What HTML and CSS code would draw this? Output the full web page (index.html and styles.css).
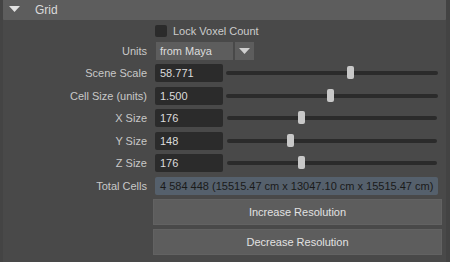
FILE: index.html
```html
<!DOCTYPE html>
<html lang="en">
<head>
    <meta charset="UTF-8">
    <meta name="viewport" content="width=device-width, initial-scale=1.0">
    <title>Grid</title>
    <link rel="stylesheet" href="styles.css">
</head>
<body>

<div class="frame">
    <div class="section-header">
        <svg class="caret" width="12" height="7" viewBox="0 0 12 7"><path d="M0 0 H11 L5.5 6 Z" fill="#e2e2e2"/></svg>
        <span>Grid</span>
    </div>

    <div class="lock-row">
        <span class="checkbox"></span>
        <span class="lock-label">Lock Voxel Count</span>
    </div>

    <div class="units-row">
        <span class="label">Units</span>
        <div class="dropdown">
            <span class="dropdown-value">from Maya</span>
            <span class="dropdown-arrow">
                <svg width="11" height="6" viewBox="0 0 11 6"><path d="M0 0 H11 L5.5 6 Z" fill="#cfcfcf"/></svg>
            </span>
        </div>
    </div>

    <div class="fields">
        <span class="label">Scene Scale</span>
        <span class="field">58.771</span>
        <div class="slider"><span class="handle" style="left: 121px"></span></div>

        <span class="label">Cell Size (units)</span>
        <span class="field">1.500</span>
        <div class="slider"><span class="handle" style="left: 101px"></span></div>

        <span class="label">X Size</span>
        <span class="field">176</span>
        <div class="slider short"><span class="handle" style="left: 71px"></span></div>

        <span class="label">Y Size</span>
        <span class="field">148</span>
        <div class="slider short"><span class="handle" style="left: 60px"></span></div>

        <span class="label">Z Size</span>
        <span class="field">176</span>
        <div class="slider short"><span class="handle" style="left: 71px"></span></div>

        <span class="label">Total Cells</span>
        <span class="field total">4 584 448 (15515.47 cm x 13047.10 cm x 15515.47 cm)</span>
    </div>

    <div class="buttons">
        <button>Increase Resolution</button>
        <button>Decrease Resolution</button>
    </div>
</div>

</body>
</html>
```

FILE: styles.css
```css
body {
    margin: 0;
    background-color: #434343;
    font-family: "Liberation Sans", Arial, sans-serif;
    font-size: 11px;
    color: #c8c8c8;
}
.frame {
    width: 450px;
    height: 262px;
    box-sizing: border-box;
    background-color: #494949;
    border-left: 3px solid #444;
    border-right: 4px solid #434343;
    overflow: hidden;
}
.section-header {
    height: 20px;
    margin-left: -1px;
    margin-right: -1px;
    background-color: #5d5d5d;
    border-radius: 0 0 3px 3px;
    display: flex;
    align-items: center;
    color: #dadada;
    font-size: 12px;
}
.caret {
    margin-left: 7px;
    margin-right: 14px;
    margin-top: -2px;
}
.lock-row {
    height: 18px;
    margin-top: 2px;
    display: flex;
    align-items: center;
    padding-left: 152px;
}
.checkbox {
    width: 12px;
    height: 12px;
    background-color: #2b2b2b;
    border-radius: 2px;
}
.lock-label {
    margin-left: 6px;
    color: #cccccc;
}
.units-row {
    display: grid;
    grid-template-columns: 144px auto;
    column-gap: 9px;
    margin-top: 2px;
    height: 18px;
    align-items: center;
}
.label {
    text-align: right;
    white-space: nowrap;
}
.dropdown {
    display: flex;
    gap: 2px;
    height: 18px;
}
.dropdown-value {
    width: 73px;
    background-color: #5d5d5d;
    padding-left: 4px;
    display: flex;
    align-items: center;
    color: #dcdcdc;
}
.dropdown-arrow {
    width: 19px;
    background-color: #5d5d5d;
    display: flex;
    align-items: center;
    justify-content: center;
}
.fields {
    margin-top: 4px;
    display: grid;
    grid-template-columns: 144px 68px 207px;
    grid-auto-rows: 18px;
    column-gap: 8px;
    row-gap: 4.6px;
    align-items: center;
}
.field {
    height: 18px;
    background-color: #2b2b2b;
    border-radius: 2px;
    padding-left: 5px;
    display: flex;
    align-items: center;
    color: #dcdcdc;
    white-space: nowrap;
    overflow: hidden;
}
.slider {
    position: relative;
    height: 4px;
    margin-left: -5px;
    background-color: #2b2b2b;
    border-radius: 2px;
}
.slider.short {
    margin-left: -4px;
    margin-right: 1px;
}
.handle {
    position: absolute;
    top: -5px;
    width: 7px;
    height: 13px;
    background-color: #c8c8c8;
    border-radius: 2px;
}
.field.total {
    grid-column: 2 / 4;
    background-color: #55606c;
    color: #1a1a1a;
}
.buttons {
    margin-top: 4px;
    margin-left: 150px;
    width: 289px;
    display: flex;
    flex-direction: column;
    gap: 4px;
}
button {
    height: 26px;
    border: 1px solid #626262;
    background-color: #5d5d5d;
    color: #e2e2e2;
    font-family: "Liberation Sans", Arial, sans-serif;
    font-size: 11px;
    padding: 0;
}
```
